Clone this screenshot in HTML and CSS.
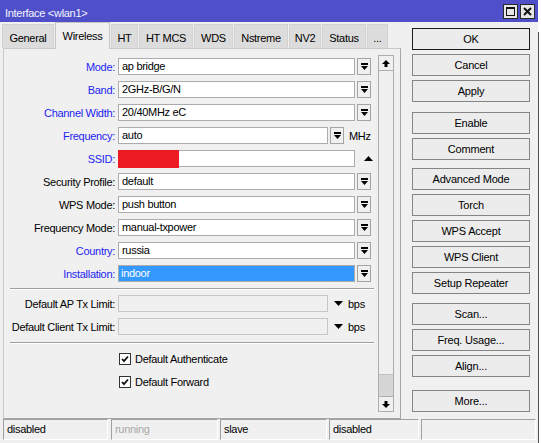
FILE: index.html
```html
<!DOCTYPE html>
<html lang="en">
<head>
  <meta charset="UTF-8">
  <title>Interface &lt;wlan1&gt;</title>
  <link rel="stylesheet" href="styles.css">
</head>
<body>
<div class="screen">
  <div class="window">
    <!-- Title bar -->
    <div class="titlebar">
      <span class="title">Interface &lt;wlan1&gt;</span>
      <div class="winbtns">
        <span class="winbtn"><svg width="9" height="9" viewBox="0 0 9 9"><rect x="0.5" y="0.5" width="8" height="8" fill="none" stroke="#111"/><rect x="0" y="0" width="9" height="2" fill="#111"/></svg></span>
        <span class="winbtn"><svg width="9" height="9" viewBox="0 0 9 9"><path d="M1 1L8 8M8 1L1 8" stroke="#111" stroke-width="2"/></svg></span>
      </div>
    </div>

    <div class="content">
      <div class="left">
        <!-- Tabs -->
        <div class="tabs">
          <div class="tab" style="width:52px">General</div>
          <div class="tab active" style="width:55px">Wireless</div>
          <div class="tab" style="width:27px">HT</div>
          <div class="tab" style="width:54px">HT MCS</div>
          <div class="tab" style="width:39px">WDS</div>
          <div class="tab" style="width:54px">Nstreme</div>
          <div class="tab" style="width:32px">NV2</div>
          <div class="tab" style="width:44px">Status</div>
          <div class="tab" style="width:21px">...</div>
        </div>

        <!-- Wireless panel -->
        <div class="panel">
          <div class="form">
            <div class="row">
              <span class="label blue">Mode:</span>
              <span class="input">ap bridge</span>
              <span class="drop"><svg width="7" height="8" viewBox="0 0 7 8"><rect width="7" height="2"/><path d="M0 3h7L3.5 7z"/></svg></span>
            </div>
            <div class="row">
              <span class="label blue">Band:</span>
              <span class="input">2GHz-B/G/N</span>
              <span class="drop"><svg width="7" height="8" viewBox="0 0 7 8"><rect width="7" height="2"/><path d="M0 3h7L3.5 7z"/></svg></span>
            </div>
            <div class="row">
              <span class="label blue">Channel Width:</span>
              <span class="input">20/40MHz eC</span>
              <span class="drop"><svg width="7" height="8" viewBox="0 0 7 8"><rect width="7" height="2"/><path d="M0 3h7L3.5 7z"/></svg></span>
            </div>
            <div class="row">
              <span class="label blue">Frequency:</span>
              <span class="input short">auto</span>
              <span class="drop"><svg width="7" height="8" viewBox="0 0 7 8"><rect width="7" height="2"/><path d="M0 3h7L3.5 7z"/></svg></span>
              <span class="unit">MHz</span>
            </div>
            <div class="row">
              <span class="label blue">SSID:</span>
              <span class="input ssid"><span class="mask"></span></span>
              <span class="arrow-slot"><svg width="9" height="5" viewBox="0 0 9 5"><path d="M0 5L4.5 0L9 5z"/></svg></span>
            </div>
            <div class="row">
              <span class="label">Security Profile:</span>
              <span class="input">default</span>
              <span class="drop"><svg width="7" height="8" viewBox="0 0 7 8"><rect width="7" height="2"/><path d="M0 3h7L3.5 7z"/></svg></span>
            </div>
            <div class="row">
              <span class="label">WPS Mode:</span>
              <span class="input">push button</span>
              <span class="drop"><svg width="7" height="8" viewBox="0 0 7 8"><rect width="7" height="2"/><path d="M0 3h7L3.5 7z"/></svg></span>
            </div>
            <div class="row">
              <span class="label">Frequency Mode:</span>
              <span class="input">manual-txpower</span>
              <span class="drop"><svg width="7" height="8" viewBox="0 0 7 8"><rect width="7" height="2"/><path d="M0 3h7L3.5 7z"/></svg></span>
            </div>
            <div class="row">
              <span class="label blue">Country:</span>
              <span class="input">russia</span>
              <span class="drop"><svg width="7" height="8" viewBox="0 0 7 8"><rect width="7" height="2"/><path d="M0 3h7L3.5 7z"/></svg></span>
            </div>
            <div class="row">
              <span class="label blue">Installation:</span>
              <span class="input selected">indoor</span>
              <span class="drop"><svg width="7" height="8" viewBox="0 0 7 8"><rect width="7" height="2"/><path d="M0 3h7L3.5 7z"/></svg></span>
            </div>

            <div class="sep"></div>

            <div class="row">
              <span class="label">Default AP Tx Limit:</span>
              <span class="input short disabled"></span>
              <span class="tri"><svg width="9" height="5" viewBox="0 0 9 5"><path d="M0 0h9L4.5 5z"/></svg></span>
              <span class="unit">bps</span>
            </div>
            <div class="row">
              <span class="label">Default Client Tx Limit:</span>
              <span class="input short disabled"></span>
              <span class="tri"><svg width="9" height="5" viewBox="0 0 9 5"><path d="M0 0h9L4.5 5z"/></svg></span>
              <span class="unit">bps</span>
            </div>

            <div class="sep sep-low"></div>

            <div class="row check-row">
              <span class="checkbox"><svg width="8" height="8" viewBox="0 0 8 8"><path d="M1 4l2 2.2L7 1.5" fill="none" stroke="#111" stroke-width="1.8"/></svg></span>
              <span>Default Authenticate</span>
            </div>
            <div class="row check-row">
              <span class="checkbox"><svg width="8" height="8" viewBox="0 0 8 8"><path d="M1 4l2 2.2L7 1.5" fill="none" stroke="#111" stroke-width="1.8"/></svg></span>
              <span>Default Forward</span>
            </div>
          </div>

          <!-- Scrollbar -->
          <div class="scrollbar">
            <span class="sb-btn"><svg width="8" height="7" viewBox="0 0 8 7"><path d="M4 0L8 4H5.5V7h-3V4H0z"/></svg></span>
            <span class="sb-track"></span>
            <span class="sb-thumb"></span>
            <span class="sb-btn sb-down"><svg width="8" height="7" viewBox="0 0 8 7"><path d="M4 7L8 3H5.5V0h-3V3H0z"/></svg></span>
          </div>
        </div>
      </div>

      <!-- Action buttons -->
      <div class="actions">
        <button class="btn default">OK</button>
        <button class="btn">Cancel</button>
        <button class="btn">Apply</button>
        <button class="btn group-1">Enable</button>
        <button class="btn">Comment</button>
        <button class="btn group-2">Advanced Mode</button>
        <button class="btn">Torch</button>
        <button class="btn">WPS Accept</button>
        <button class="btn">WPS Client</button>
        <button class="btn">Setup Repeater</button>
        <button class="btn group-3">Scan...</button>
        <button class="btn">Freq. Usage...</button>
        <button class="btn">Align...</button>
        <button class="btn group-4">More...</button>
      </div>
    </div>

    <!-- Status bar -->
    <div class="statusbar">
      <span class="cell" style="width:105px">disabled</span>
      <span class="cell muted" style="width:107px">running</span>
      <span class="cell" style="width:107px">slave</span>
      <span class="cell" style="width:90px">disabled</span>
      <span class="cell" style="width:115px"></span>
    </div>
  </div>
  <div class="edge"></div>
</div>
</body>
</html>
```

FILE: styles.css
```css
/* General */
* {
  box-sizing: border-box;
}

body {
  margin: 0;
  font-family: "Liberation Sans", Arial, sans-serif;
  font-size: 11px;
  letter-spacing: -0.3px;
  color: #000;
  background: #fff;
}

.screen {
  display: flex;
  width: 541px;
  height: 443px;
  overflow: hidden;
}

.window {
  width: 538px;
  height: 443px;
  background: #f0f0f0;
  display: flex;
  flex-direction: column;
}

.edge {
  width: 3px;
  margin-top: 32px;
  border-left: 1px solid #505050;
}

/* Title bar */
.titlebar {
  height: 22px;
  flex-shrink: 0;
  background: #4f50c9;
  color: #f4f4ff;
  display: flex;
  align-items: center;
  justify-content: space-between;
  padding: 0 3px 0 5px;
}

.title {
  padding-top: 3px;
}

.winbtns {
  display: flex;
  gap: 2px;
}

.winbtn {
  width: 15px;
  height: 15px;
  background: #e6e6e6;
  border: 1px solid #2a2a2a;
  display: flex;
  align-items: center;
  justify-content: center;
}

/* Main area */
.content {
  display: flex;
  height: 397px;
  flex-shrink: 0;
}

.left {
  width: 401px;
  padding-left: 2px;
  display: flex;
  flex-direction: column;
}

/* Tabs */
.tabs {
  display: flex;
  align-items: flex-end;
  height: 26px;
  flex-shrink: 0;
  position: relative;
  z-index: 1;
}

.tab {
  height: 24px;
  margin-right: 1px;
  padding-top: 3px;
  background: #dcdcdc;
  border: 1px solid #d2d2d2;
  border-bottom: none;
  display: flex;
  align-items: center;
  justify-content: center;
  white-space: nowrap;
}

.tab.active {
  height: 27px;
  margin-bottom: -1px;
  padding-top: 0;
  background: #f0f0f0;
  border-color: #c4c4c4;
}

/* Panel */
.panel {
  flex: 1;
  width: 398px;
  margin-left: 1px;
  border: 1px solid #cacaca;
  border-right-color: #a6a6a6;
  border-bottom-color: #a6a6a6;
  display: flex;
  padding: 6px 6px 6px 0;
}

.form {
  flex: 1;
  display: flex;
  flex-direction: column;
  gap: 6px;
  padding-top: 3px;
}

.row {
  display: flex;
  align-items: center;
  height: 17px;
  flex-shrink: 0;
  white-space: nowrap;
}

.label {
  width: 111px;
  flex-shrink: 0;
  text-align: right;
  margin-right: 3px;
}

.label.blue {
  color: #1e1ef0;
}

.input {
  width: 237px;
  height: 17px;
  flex-shrink: 0;
  border: 1px solid #acacac;
  background: #fff;
  padding: 0 3px;
  line-height: 15px;
  overflow: hidden;
}

.input.short {
  width: 210px;
}

.input.selected {
  background: #3399ff;
  color: #fff;
  padding-left: 2px;
}

.input.disabled {
  background: #f0f0f0;
  border-color: #c6c6c6;
}

.input.ssid {
  position: relative;
  overflow: visible;
}

.mask {
  position: absolute;
  left: -1px;
  top: -1px;
  width: 61px;
  height: 18px;
  background: #ed1c24;
}

.drop {
  width: 14px;
  height: 17px;
  margin-left: 2px;
  flex-shrink: 0;
  border: 1px solid #a4a4a4;
  background: #f0f0f0;
  display: flex;
  align-items: center;
  justify-content: center;
}

.arrow-slot {
  width: 16px;
  margin-left: 2px;
  display: flex;
  justify-content: flex-end;
}

.tri {
  margin-left: 6px;
  display: flex;
}

.unit {
  margin-left: 5px;
}

.sep {
  flex-shrink: 0;
  margin: 0 4px -1px 6px;
  border-top: 1px solid #a0a0a0;
  border-bottom: 1px solid #fff;
}

.sep-low {
  margin-top: 1px;
  margin-bottom: 0;
}

.check-row {
  padding-left: 115px;
}

.checkbox {
  width: 12px;
  height: 12px;
  margin-right: 4px;
  border: 1px solid #333;
  background: #fff;
  display: flex;
  align-items: center;
  justify-content: center;
}

/* Scrollbar */
.scrollbar {
  width: 16px;
  border: 1px solid #adadad;
  display: flex;
  flex-direction: column;
  background: #f0f0f0;
}

.sb-btn {
  height: 15px;
  flex-shrink: 0;
  border-bottom: 1px solid #adadad;
  display: flex;
  align-items: center;
  justify-content: center;
}

.sb-down {
  border-bottom: none;
  border-top: 1px solid #adadad;
}

.sb-track {
  flex: 1;
}

.sb-thumb {
  height: 22px;
  flex-shrink: 0;
  background: #d6d6d6;
  border-top: 1px solid #c2c2c2;
}

/* Buttons */
.actions {
  width: 118px;
  margin-left: 11px;
  padding-top: 6px;
  display: flex;
  flex-direction: column;
  gap: 4px;
}

.btn {
  height: 22px;
  flex-shrink: 0;
  padding: 0;
  font-family: inherit;
  font-size: 11px;
  letter-spacing: -0.2px;
  color: #000;
  background: #ececec;
  border: 1px solid #858585;
}

.btn.default {
  border-color: #1a1a1a;
}

.group-1 {
  margin-top: 6px;
}

.group-2 {
  margin-top: 4px;
}

.group-3 {
  margin-top: 5px;
}

.group-4 {
  margin-top: 9px;
}

/* Status bar */
.statusbar {
  height: 21px;
  flex-shrink: 0;
  display: flex;
  padding-left: 3px;
}

.cell {
  height: 21px;
  margin-right: 2px;
  padding-left: 3px;
  line-height: 19px;
  border: 1px solid #fff;
  border-top-color: #a0a0a0;
  border-left-color: #a0a0a0;
}

.cell:first-child {
  margin-right: 3px;
}

.cell.muted {
  color: #a8a8a8;
}
```
